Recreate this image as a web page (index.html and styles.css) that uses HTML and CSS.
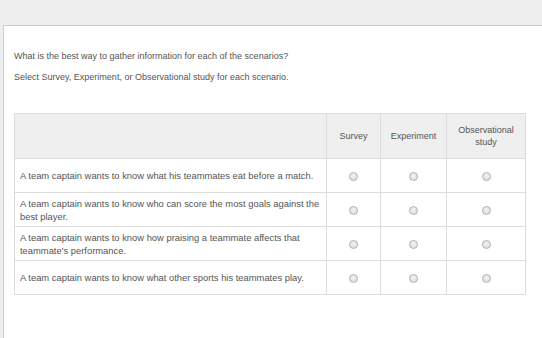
FILE: index.html
```html
<!DOCTYPE html>
<html>
<head>
<meta charset="utf-8">
<link rel="stylesheet" href="styles.css">
</head>
<body>
<div class="panel">
  <p class="q">What is the best way to gather information for each of the scenarios?</p>
  <p class="q second">Select Survey, Experiment, or Observational study for each scenario.</p>
  <table class="grid">
    <thead>
      <tr>
        <th class="stem"></th>
        <th class="c1">Survey</th>
        <th class="c2">Experiment</th>
        <th class="c3">Observational<br>study</th>
      </tr>
    </thead>
    <tbody>
      <tr>
        <td class="stem">A team captain wants to know what his teammates eat before a match.</td>
        <td><span class="radio"></span></td>
        <td><span class="radio"></span></td>
        <td><span class="radio"></span></td>
      </tr>
      <tr>
        <td class="stem">A team captain wants to know who can score the most goals against the best player.</td>
        <td><span class="radio"></span></td>
        <td><span class="radio"></span></td>
        <td><span class="radio"></span></td>
      </tr>
      <tr>
        <td class="stem">A team captain wants to know how praising a teammate affects that teammate's performance.</td>
        <td><span class="radio"></span></td>
        <td><span class="radio"></span></td>
        <td><span class="radio"></span></td>
      </tr>
      <tr>
        <td class="stem">A team captain wants to know what other sports his teammates play.</td>
        <td><span class="radio"></span></td>
        <td><span class="radio"></span></td>
        <td><span class="radio"></span></td>
      </tr>
    </tbody>
  </table>
</div>
</body>
</html>
```
FILE: styles.css
```css
html, body {
  margin: 0;
  padding: 0;
  background: #eeeeee;
  font-family: "Liberation Sans", Arial, sans-serif;
  overflow: hidden;
}
.panel {
  margin: 25px 0 0 3px;
  width: 539px;
  height: 313px;
  background: #ffffff;
  border-top: 1px solid #cccccc;
  border-left: 1px solid #cccccc;
  padding: 24px 0 0 10px;
  box-sizing: border-box;
}
.q {
  margin: 0;
  font-size: 9px;
  line-height: 12px;
  color: #555555;
}
.q.second {
  margin-top: 9px;
}
.grid {
  margin-top: 30px;
  border-collapse: collapse;
  width: 512px;
  font-size: 9.4px;
  color: #555555;
}
.grid th, .grid td {
  border: 1px solid #dddddd;
  padding: 0;
}
.grid thead th {
  background: #efefef;
  height: 44px;
  font-weight: normal;
  font-size: 9px;
  text-align: center;
  line-height: 12px;
  color: #555555;
}
.grid th.stem { width: 311px; }
.grid th.c1 { width: 53px; }
.grid th.c2 { width: 65px; }
.grid tbody td {
  height: 33px;
  text-align: center;
  vertical-align: middle;
}
.grid tbody td.stem {
  text-align: left;
  padding: 0 6px 0 5px;
  line-height: 13px;
}
.radio {
  display: inline-block;
  width: 7px;
  height: 7px;
  border-radius: 50%;
  border: 1px solid #b5b5b5;
  background: radial-gradient(circle at 50% 40%, #f4f4f4, #d6d6d6);
  vertical-align: middle;
}
```
